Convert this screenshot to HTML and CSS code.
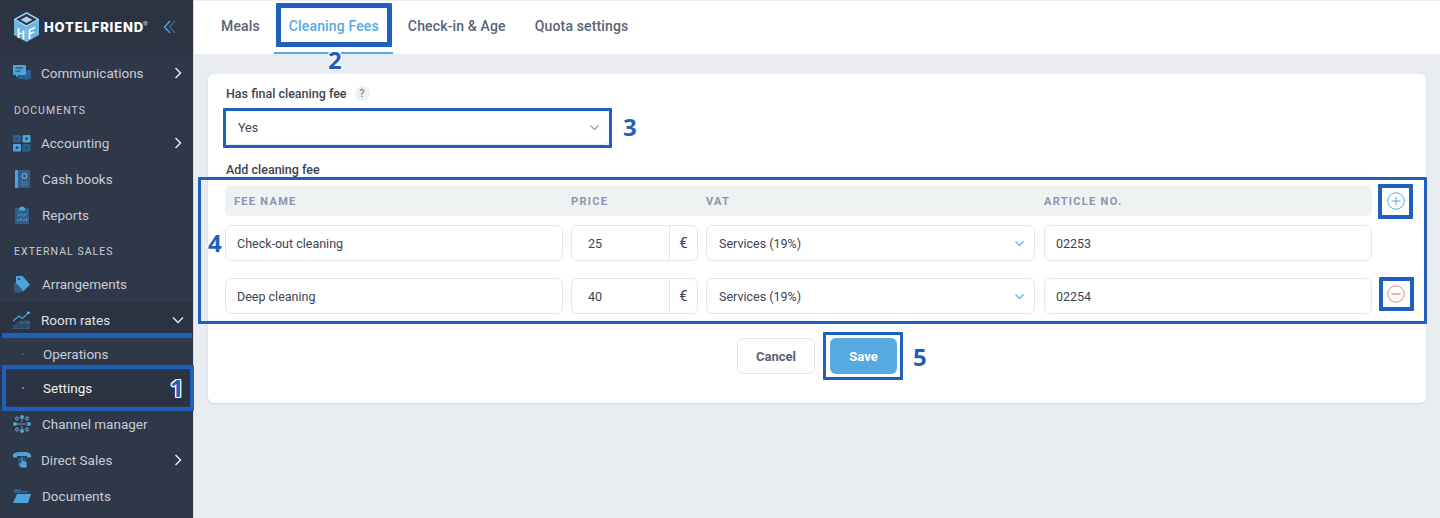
FILE: index.html
```html
<!DOCTYPE html>
<html lang="en">
<head>
    <meta charset="utf-8"/>
    <title>Cleaning Fees</title>
    <link rel="stylesheet" href="styles.css">
</head>
<body>
<div class="page">
    <aside class="sidebar">
        <div class="brand">
            <svg class="logo" width="25" height="30" viewBox="0 0 25 30">
                <path d="M12.500 0 25 7V23L12.500 30 0 23V7Z" fill="#6db5e6"/>
                <path d="M12.500 1 24 7.500 12.500 14 1 7.500Z" fill="#2c3444" stroke="#a9d5f1" stroke-width="1.400"/>
                <path d="M12.500 4.500 18.500 7.700 12.500 11 6.500 7.700Z" fill="#a9d5f1"/>
                <path d="M12.500 14V30" stroke="#8cc6ec" stroke-width=".8"/>
                <path d="M4.500 16V26M9.500 18.500V27.500M4.500 21.500H9.500M15.500 18V27M15.500 18 21 15.500M15.500 22 20 20" fill="none" stroke="#fff" stroke-width="1.700"/>
            </svg>
            <span class="brand-name">HOTELFRIEND<sup>®</sup></span>
            <svg class="collapse" width="13" height="14" viewBox="0 0 13 14">
                <path d="M7 1 1.500 7 7 13" fill="none" stroke="#4da3dc" stroke-width="1.400"/>
                <path d="M12 1 6.500 7 12 13" fill="none" stroke="#35648f" stroke-width="1.400"/>
            </svg>
        </div>
        <a class="item">
            <svg class="icon" viewBox="0 0 18 18">
                <rect x="5" y="6" width="13" height="9" rx="1" fill="#2f5f8a"/>
                <path d="M14 15v2.500L11 15Z" fill="#2f5f8a"/>
                <path d="M1 1h11a1 1 0 0 1 1 1v8a1 1 0 0 1-1 1H5.500L3 13.500V11H1a1 1 0 0 1-1-1V2a1 1 0 0 1 1-1Z" fill="#4da3dc"/>
                <path d="M2.500 4H10M2.500 7H7.500" stroke="#2c3444" stroke-width="1"/>
            </svg>
            <span>Communications</span>
            <svg class="chev" width="8" height="12" viewBox="0 0 8 12"><path d="M1.500 1 6.500 6 1.500 11" fill="none" stroke="#e4e7eb" stroke-width="1.500"/></svg>
        </a>
        <div class="section">DOCUMENTS</div>
        <a class="item">
            <svg class="icon" viewBox="0 0 18 18">
                <rect x="0" y="1" width="8" height="7.500" rx="1" fill="#2f5f8a"/>
                <rect x="9.500" y="1" width="8" height="7.500" rx="1" fill="#4da3dc"/>
                <rect x="0" y="10" width="8" height="7.500" rx="1" fill="#4da3dc"/>
                <rect x="9.500" y="10" width="8" height="7.500" rx="1" fill="#2f5f8a"/>
                <path d="M2.500 4.700H5.500M12 4.700H15M13.500 3.200V6.200M2.500 13.700H5.500M4 12.200V15.200M12 13.700H15" stroke="#2c3444" stroke-width="1"/>
            </svg>
            <span>Accounting</span>
            <svg class="chev" width="8" height="12" viewBox="0 0 8 12"><path d="M1.500 1 6.500 6 1.500 11" fill="none" stroke="#e4e7eb" stroke-width="1.500"/></svg>
        </a>
        <a class="item wide">
            <svg class="icon" viewBox="0 0 18 18">
                <rect x="2" y="0" width="15" height="18" rx="1" fill="#2f5f8a"/>
                <rect x="2" y="0" width="3" height="18" rx="1" fill="#4da3dc"/>
                <path d="M8 12.500H14.500M8 15H14.500" stroke="#4d7ea6" stroke-width="1"/>
                <circle cx="11.500" cy="6" r="2.500" fill="none" stroke="#8fbcdd" stroke-width="1"/>
            </svg>
            <span>Cash books</span>
        </a>
        <a class="item wide">
            <svg class="icon" viewBox="0 0 18 18">
                <rect x="2" y="2" width="14" height="16" rx="1" fill="#2f5f8a"/>
                <path d="M6 3a3 2.500 0 0 1 6 0v1.500H6Z" fill="#4da3dc"/>
                <path d="M5 10 8 8 10.500 10 13.500 7.500M5 15V13M8 15V12M11 15V13M13.500 15V12" fill="none" stroke="#6f9cc0" stroke-width="1"/>
            </svg>
            <span>Reports</span>
        </a>
        <div class="section">EXTERNAL SALES</div>
        <a class="item wide">
            <svg class="icon" viewBox="0 0 18 18">
                <path d="M1 9 4 5 12 16 5 18 1 16Z" fill="#2f5f8a"/>
                <path d="M3 1h6.500L17 9.500 10.500 16 3 8Z" fill="#4da3dc"/>
                <circle cx="6" cy="4" r="1" fill="#2f3849"/>
            </svg>
            <span>Arrangements</span>
        </a>
        <a class="item current">
            <svg class="icon" viewBox="0 0 18 18">
                <path d="M0 10 6 5 9.500 7.500 15.500 1.500" fill="none" stroke="#4da3dc" stroke-width="1.200"/>
                <circle cx="15.500" cy="1.800" r="1.300" fill="#7cc0ec"/>
                <path d="M0 13.500H3.500V12L6 10H10.500V9.500H17V18H0Z" fill="#2f5f8a"/>
                <path d="M0 14H17M0 16H17M6 10V18M11 10V18" stroke="#2b3242" stroke-width=".8"/>
            </svg>
            <span>Room rates</span>
            <svg class="chev" width="12" height="8" viewBox="0 0 12 8"><path d="M1 1.500 6 6.500 11 1.500" fill="none" stroke="#e4e7eb" stroke-width="1.500"/></svg>
        </a>
        <a class="sub dim"><i class="dot"></i><span>Operations</span></a>
        <a class="sub on"><i class="dot"></i><span>Settings</span></a>
        <a class="item wide">
            <svg class="icon" viewBox="0 0 18 18">
                <circle cx="9" cy="2" r="2" fill="#4da3dc"/><circle cx="9" cy="16" r="2" fill="#4da3dc"/>
                <circle cx="2" cy="9" r="2" fill="#4da3dc"/><circle cx="16" cy="9" r="2" fill="#4da3dc"/>
                <circle cx="4" cy="3.500" r="1.500" fill="none" stroke="#7fb3da"/><circle cx="14" cy="3.500" r="1.500" fill="none" stroke="#7fb3da"/>
                <circle cx="4" cy="14.500" r="1.500" fill="none" stroke="#7fb3da"/><circle cx="14" cy="14.500" r="1.500" fill="none" stroke="#7fb3da"/>
                <path d="M9 4V7M9 11V14M4 9H14" stroke="#5f93bd" stroke-width="1"/>
            </svg>
            <span>Channel manager</span>
        </a>
        <a class="item">
            <svg class="icon" viewBox="0 0 18 18">
                <path d="M0 5C0 2 2 1 9 1s9 1 9 4v1.500h-4V5H4v1.500H0Z" fill="#4da3dc"/>
                <rect x="5" y="7" width="8" height="9" rx="1" fill="#2f5f8a"/>
                <path d="M8 5.500V12L6 11V14L8 17H14V10.500L10 9.500V5.500Z" fill="#4da3dc" stroke="#2f3849" stroke-width=".8"/>
            </svg>
            <span>Direct Sales</span>
            <svg class="chev" width="8" height="12" viewBox="0 0 8 12"><path d="M1.500 1 6.500 6 1.500 11" fill="none" stroke="#e4e7eb" stroke-width="1.500"/></svg>
        </a>
        <a class="item wide">
            <svg class="icon" viewBox="0 0 18 18">
                <path d="M1 2h6l2 2h6v2H1Z" fill="#2f5f8a"/>
                <path d="M4 7H18L15 16H0Z" fill="#4da3dc"/>
            </svg>
            <span>Documents</span>
        </a>
    </aside>

    <main class="content">
        <nav class="tabs">
            <a class="tab">Meals</a>
            <a class="tab active">Cleaning Fees</a>
            <a class="tab">Check-in &amp; Age</a>
            <a class="tab">Quota settings</a>
        </nav>
        <section class="card">
            <div class="label">Has final cleaning fee <span class="hint">?</span></div>
            <div class="field select final">
                <span>Yes</span>
                <svg width="9" height="5" viewBox="0 0 9 5"><path d="M.500 .500 4.500 4.500 8.500 .500" fill="none" stroke="#56aae0" stroke-width="1.100"/></svg>
            </div>
            <div class="label add">Add cleaning fee</div>
            <div class="fees">
                <div class="fees-head">
                    <span>FEE NAME</span>
                    <span>PRICE</span>
                    <span>VAT</span>
                    <span>ARTICLE NO.</span>
                </div>
                <div class="fee-row">
                    <div class="field">Check-out cleaning</div>
                    <div class="field price"><span class="amount">25</span><span class="unit">€</span></div>
                    <div class="field select">
                        <span>Services (19%)</span>
                        <svg width="9" height="5" viewBox="0 0 9 5"><path d="M.500 .500 4.500 4.500 8.500 .500" fill="none" stroke="#56aae0" stroke-width="1.100"/></svg>
                    </div>
                    <div class="field">02253</div>
                </div>
                <div class="fee-row">
                    <div class="field">Deep cleaning</div>
                    <div class="field price"><span class="amount">40</span><span class="unit">€</span></div>
                    <div class="field select">
                        <span>Services (19%)</span>
                        <svg width="9" height="5" viewBox="0 0 9 5"><path d="M.500 .500 4.500 4.500 8.500 .500" fill="none" stroke="#56aae0" stroke-width="1.100"/></svg>
                    </div>
                    <div class="field">02254</div>
                </div>
                <svg class="round-btn plus" width="18" height="18" viewBox="0 0 18 18">
                    <circle cx="9" cy="9" r="8.200" fill="none" stroke="#56aae0"/>
                    <path d="M4.500 9H13.500M9 4.500V13.500" stroke="#56aae0"/>
                </svg>
                <svg class="round-btn minus" width="18" height="18" viewBox="0 0 18 18">
                    <circle cx="9" cy="9" r="8.200" fill="none" stroke="#ee8580"/>
                    <path d="M4.500 9H13.500" stroke="#ee8580" stroke-width="1.400"/>
                </svg>
            </div>
            <div class="actions">
                <button class="btn cancel">Cancel</button>
                <button class="btn save">Save</button>
            </div>
        </section>
    </main>

    <!-- tutorial marks drawn on top of the screenshot -->
    <div class="mark-line"></div>
    <div class="mark m1"></div>
    <div class="mark m2"></div>
    <div class="mark m3"></div>
    <div class="mark m4"></div>
    <div class="mark m4a"></div>
    <div class="mark m4b"></div>
    <div class="mark m5"></div>
    <span class="num n1">1</span>
    <span class="num n2">2</span>
    <span class="num n3">3</span>
    <span class="num n4">4</span>
    <span class="num n5">5</span>
</div>
</body>
</html>
```

FILE: styles.css
```css
html, body {
    margin: 0;
    padding: 0;
    height: 518px;
    overflow: hidden;
    font-family: Roboto, "Liberation Sans", sans-serif;
    color: #3d4350;
    background-color: #e9ecf1;
}
.page {
    position: relative;
    display: flex;
    width: 1440px;
    height: 518px;
    overflow: hidden;
}
.sidebar {
    flex: 0 0 193px;
    background-color: #2f3849;
    border-right: 1px solid #d5d8dd;
    color: #c9ccd2;
    font-size: 13.500px;
}
.brand {
    display: flex;
    align-items: center;
    height: 55px;
    padding-left: 14px;
    padding-bottom: 1px;
    box-sizing: border-box;
    background-color: #2c3444;
}
.brand-name {
    margin-left: 5px;
    font-family: Inter, "Liberation Sans", sans-serif;
    font-size: 13px;
    font-weight: 800;
    letter-spacing: 0.85px;
    color: #ffffff;
}
.brand-name sup {
    margin-left: -1px;
    font-size: 7px;
    font-weight: 400;
    color: #c9ccd2;
    letter-spacing: 0;
    vertical-align: 5px;
    line-height: 0;
}
.collapse {
    margin-left: 15px;
}
.item {
    display: flex;
    align-items: center;
    height: 36px;
    padding-left: 13px;
}
.item .icon {
    flex: 0 0 18px;
    width: 18px;
    height: 18px;
    margin-right: 10px;
}
.item.wide .icon {
    margin-right: 11px;
}
.item .chev {
    margin-left: auto;
    margin-right: 11px;
}
.item.current {
    background-color: #2b3242;
    color: #dfe1e5;
}
.item.current .chev {
    margin-right: 9px;
}
.section {
    display: flex;
    align-items: center;
    height: 34px;
    padding-left: 14px;
    padding-top: 4px;
    box-sizing: border-box;
    font-size: 10.500px;
    letter-spacing: 1.050px;
    color: #c9ccd2;
}
.section + .item + .item + .item + .section {
    height: 33px;
}
.sub {
    display: flex;
    align-items: center;
    height: 33px;
    padding-left: 22px;
    padding-bottom: 1px;
    box-sizing: border-box;
}
.sub .dot {
    width: 2px;
    height: 2px;
    margin-right: 19px;
    border-radius: 50%;
    background-color: #56aae0;
}
.sub.dim .dot {
    background-color: #35648f;
}
.sub.on {
    height: 35px;
    color: #eef0f3;
    background-color: #2b3242;
}
.content {
    flex: 1;
    min-width: 0;
}
.tabs {
    display: flex;
    height: 54px;
    padding-left: 12.500px;
    box-sizing: border-box;
    background-color: #ffffff;
    border-top: 1px solid #e9ecf1;
}
.tab {
    display: flex;
    align-items: center;
    padding: 0 14.500px 4px;
    font-size: 14px;
    font-weight: 500;
    color: #596377;
    letter-spacing: 0.15px;
}
.tab.active {
    color: #56aae0;
    padding-bottom: 2px;
    border-bottom: 2px solid #56aae0;
}
.card {
    margin: 20px 14px 0;
    height: 329px;
    padding: 11px 17px 0;
    box-sizing: border-box;
    background-color: #ffffff;
    border-radius: 6px;
    box-shadow: 0 1px 2px rgba(40, 50, 70, 0.12);
}
.label {
    display: flex;
    align-items: center;
    height: 16px;
    padding-left: 1px;
    font-size: 12.500px;
    font-weight: 500;
    color: #3d4350;
}
.hint {
    width: 15px;
    height: 15px;
    margin-left: 8px;
    border-radius: 50%;
    background-color: #eef0f3;
    color: #7d8696;
    font-size: 11px;
    text-align: center;
    line-height: 15px;
}
.field {
    display: flex;
    align-items: center;
    height: 36px;
    padding: 0 11px;
    box-sizing: border-box;
    background-color: #ffffff;
    border: 1px solid #e5e7eb;
    border-radius: 6px;
    font-size: 12.500px;
    color: #3d4350;
}
.select {
    justify-content: space-between;
    padding: 0 10px 0 12px;
}
.final {
    width: 385px;
    margin-top: 8px;
}
.add {
    margin-top: 16px;
}
.fees {
    position: relative;
    margin-top: 9px;
}
.fees-head, .fee-row {
    display: grid;
    grid-template-columns: 338px 127px 330px 328px;
    column-gap: 8px;
    width: 1147px;
}
.fees-head {
    height: 30px;
    align-items: center;
    background-color: #eff2f3;
    border-radius: 5px;
    font-size: 11px;
    font-weight: 700;
    letter-spacing: 1.300px;
    color: #8b95ad;
}
.fees-head span:first-child {
    padding-left: 9px;
}
.fee-row {
    margin-top: 17px;
}
.fees-head + .fee-row {
    margin-top: 9px;
}
.fee-row .select {
    margin-right: 1px;
}
.price {
    padding: 0;
}
.amount {
    flex: 1;
    padding-left: 16px;
}
.unit {
    flex: 0 0 27px;
    height: 100%;
    display: flex;
    align-items: center;
    justify-content: center;
    border-left: 1px solid #e5e7eb;
    font-size: 15px;
}
.round-btn {
    position: absolute;
    left: 1162px;
}
.round-btn.plus {
    top: 6px;
}
.round-btn.minus {
    top: 99px;
}
.actions {
    display: flex;
    justify-content: center;
    gap: 15px;
    margin-top: 24px;
}
.btn {
    height: 36px;
    border-radius: 6px;
    font-family: inherit;
    font-size: 13px;
    font-weight: 700;
    box-sizing: border-box;
}
.cancel {
    width: 78px;
    background-color: #ffffff;
    border: 1px solid #e2e5ea;
    color: #596377;
}
.save {
    width: 67px;
    background-color: #56aae0;
    border: none;
    color: #ffffff;
}
.mark, .mark-line, .num {
    position: absolute;
}
.mark {
    box-sizing: border-box;
    border: 3px solid #1f60bf;
    border-radius: 1px;
}
.mark-line {
    left: 2px;
    top: 333px;
    width: 190px;
    height: 5px;
    background-color: #1f60bf;
    border-radius: 1px;
}
.m1 { left: 2px; top: 365px; width: 192px; height: 46px; border-width: 4px; }
.m2 { left: 276px; top: 3px; width: 116px; height: 44px; border-width: 5px; }
.m3 { left: 223px; top: 108px; width: 389px; height: 40px; }
.m4 { left: 198px; top: 177px; width: 1229px; height: 147px; }
.m4a { left: 1378px; top: 184px; width: 35px; height: 35px; border-width: 4px; }
.m4b { left: 1379px; top: 277px; width: 35px; height: 34px; border-width: 4px; }
.m5 { left: 823px; top: 332px; width: 80px; height: 48px; }
.num {
    font-family: "Open Sans", "Liberation Sans", sans-serif;
    font-size: 24px;
    font-weight: 700;
    line-height: 28px;
    color: #1f60bf;
    text-shadow: -1px 0 #fff, 1px 0 #fff, 0 -1px #fff, 0 1px #fff, -1px -1px #fff, 1px 1px #fff, -1px 1px #fff, 1px -1px #fff;
}
.n1 { left: 170px; top: 374px; }
.n2 { left: 328px; top: 46px; }
.n3 { left: 623px; top: 113px; }
.n4 { left: 208px; top: 229px; }
.n5 { left: 913px; top: 343px; }
```
